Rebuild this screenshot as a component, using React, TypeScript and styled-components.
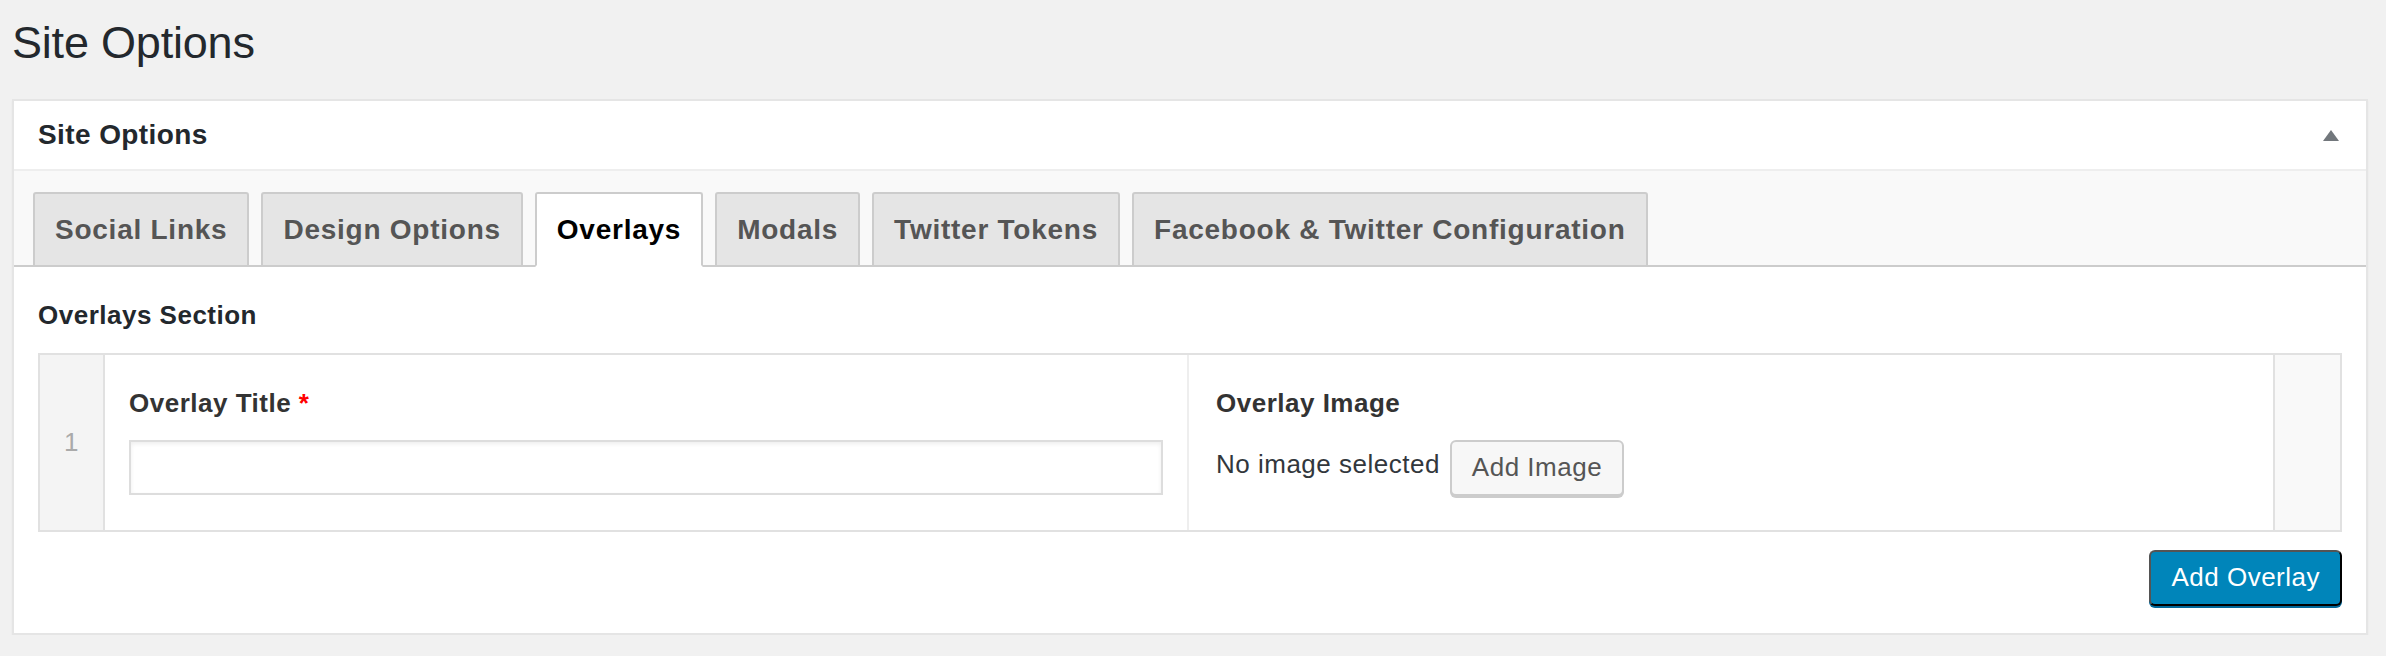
import React from 'react';
import styled, { createGlobalStyle } from 'styled-components';

const GlobalStyle = createGlobalStyle`
  * {
    box-sizing: border-box;
  }

  body {
    margin: 0;
    background: #f1f1f1;
    font-family: 'Liberation Sans', Arial, sans-serif;
    color: #444;
    letter-spacing: 0.5px;
  }
`;

const Page = styled.div`
  padding: 0 18px 0 12px;
`;

const PageTitle = styled.h1`
  margin: 0;
  padding: 13px 0 27px;
  font-size: 45px;
  font-weight: 400;
  line-height: 59px;
  letter-spacing: -0.2px;
  color: #23282d;
`;

const Panel = styled.section`
  background: #fff;
  border: 2px solid #e5e5e5;
  box-shadow: 0 2px 2px rgba(0, 0, 0, 0.04);
`;

const PanelHeader = styled.div`
  display: flex;
  align-items: center;
  justify-content: space-between;
  height: 70px;
  padding: 0 27px 0 24px;
  border-bottom: 2px solid #eee;
`;

const PanelTitle = styled.h2`
  margin: 0;
  font-size: 28px;
  font-weight: 700;
  color: #23282d;
  letter-spacing: 0.4px;
`;

const Toggle = styled.svg`
  display: block;
  width: 16px;
  height: 11px;
`;

const TabBar = styled.div`
  display: flex;
  gap: 12px;
  padding: 21px 0 0 19px;
  background: #f9f9f9;
  border-bottom: 2px solid #ccc;
`;

const Tab = styled.div<{ $active?: boolean }>`
  height: 75px;
  margin-bottom: -2px;
  padding: 0 20px;
  border: 2px solid #ccc;
  border-bottom-color: ${(p) => (p.$active ? '#fff' : '#ccc')};
  border-radius: 3px 3px 0 0;
  background: ${(p) => (p.$active ? '#fff' : '#e5e5e5')};
  color: ${(p) => (p.$active ? '#000' : '#555')};
  font-size: 28px;
  font-weight: 700;
  line-height: 71px;
  letter-spacing: 0.75px;
  white-space: nowrap;
`;

const Body = styled.div`
  padding: 30px 24px 27px;
`;

const SectionLabel = styled.div`
  margin-bottom: 20px;
  font-size: 26px;
  font-weight: 700;
  line-height: 36px;
  color: #23282d;
`;

const Repeater = styled.div`
  border: 2px solid #e1e1e1;
`;

const Row = styled.div`
  display: grid;
  grid-template-columns: 65px 1fr 1fr 67px;
  min-height: 174px;
`;

const NumCell = styled.div`
  display: flex;
  align-items: center;
  justify-content: center;
  background: #f4f4f4;
  border-right: 2px solid #e1e1e1;
  font-size: 26px;
  color: #aaa;
`;

const FieldCell = styled.div<{ $divider?: boolean }>`
  padding: 30px 24px 34px ${(p) => (p.$divider ? '24px' : '27px')};
  border-right: ${(p) => (p.$divider ? '2px solid #eee' : 'none')};
`;

const ActionCell = styled.div`
  background: #f9f9f9;
  border-left: 2px solid #e1e1e1;
`;

const FieldLabel = styled.div`
  margin-bottom: 19px;
  font-size: 26px;
  font-weight: 700;
  line-height: 36px;
  color: #333;
`;

const Required = styled.span`
  color: #f00;
`;

const TextInput = styled.input`
  display: block;
  width: 100%;
  height: 55px;
  margin: 0;
  padding: 0 10px;
  border: 2px solid #ddd;
  box-shadow: inset 0 2px 4px rgba(0, 0, 0, 0.07);
  background: #fff;
  font: inherit;
  font-size: 26px;
  outline: none;
`;

const ImageRow = styled.div`
  display: flex;
  align-items: flex-start;
  gap: 10px;
`;

const ImageStatus = styled.span`
  font-size: 26px;
  line-height: 48px;
  color: #32373c;
`;

const Button = styled.button<{ $primary?: boolean }>`
  height: 56px;
  margin: 0;
  padding: 0 20px 2px;
  border: 2px solid ${(p) => (p.$primary ? '#0073aa #006799 #006799' : '#ccc')};
  border-radius: 6px;
  background: ${(p) => (p.$primary ? '#0085ba' : '#f7f7f7')};
  box-shadow: 0 2px 0 ${(p) => (p.$primary ? '#006799' : '#ccc')};
  color: ${(p) => (p.$primary ? '#fff' : '#555')};
  font-family: inherit;
  font-size: 26px;
  letter-spacing: 0.5px;
  line-height: 50px;
  white-space: nowrap;
  cursor: pointer;
`;

const Footer = styled.div`
  display: flex;
  justify-content: flex-end;
  margin-top: 18px;
`;

const tabs = [
  'Social Links',
  'Design Options',
  'Overlays',
  'Modals',
  'Twitter Tokens',
  'Facebook & Twitter Configuration',
];

export default function App() {
  return (
    <Page>
      <GlobalStyle />
      <PageTitle>Site Options</PageTitle>
      <Panel>
        <PanelHeader>
          <PanelTitle>Site Options</PanelTitle>
          <Toggle viewBox="0 0 16 11">
            <polygon points="0,11 8,0 16,11" fill="#72777c" />
          </Toggle>
        </PanelHeader>
        <TabBar>
          {tabs.map((t) => (
            <Tab key={t} $active={t === 'Overlays'}>
              {t}
            </Tab>
          ))}
        </TabBar>
        <Body>
          <SectionLabel>Overlays Section</SectionLabel>
          <Repeater>
            <Row>
              <NumCell>1</NumCell>
              <FieldCell $divider>
                <FieldLabel>
                  Overlay Title <Required>*</Required>
                </FieldLabel>
                <TextInput type="text" />
              </FieldCell>
              <FieldCell>
                <FieldLabel>Overlay Image</FieldLabel>
                <ImageRow>
                  <ImageStatus>No image selected</ImageStatus>
                  <Button>Add Image</Button>
                </ImageRow>
              </FieldCell>
              <ActionCell />
            </Row>
          </Repeater>
          <Footer>
            <Button $primary>Add Overlay</Button>
          </Footer>
        </Body>
      </Panel>
    </Page>
  );
}
